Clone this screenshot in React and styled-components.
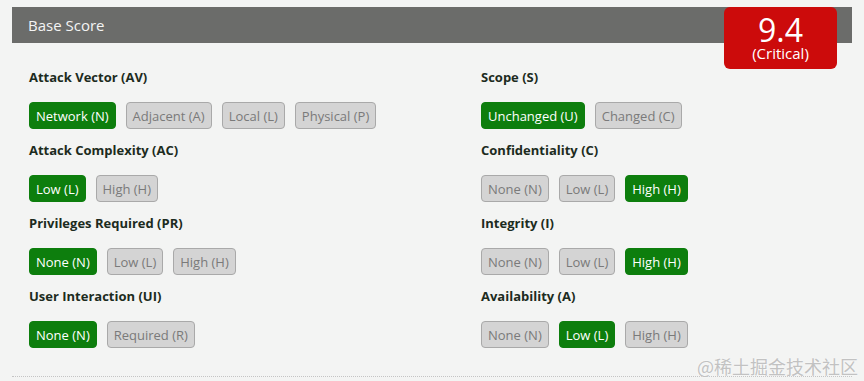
import React from 'react';
import styled, { createGlobalStyle } from 'styled-components';

const GlobalStyle = createGlobalStyle`
  html, body {
    margin: 0;
    padding: 0;
    background: #f3f4f3;
  }
  body {
    font-family: "Open Sans", "Noto Sans", sans-serif;
  }
`;

const Page = styled.div`
  position: relative;
  width: 864px;
  height: 381px;
  padding: 7px 12px 0;
  box-sizing: border-box;
  overflow: hidden;
`;

const Panel = styled.div`
  position: relative;
  border-bottom: 1px dotted #c4c4c4;
`;

const HeaderBar = styled.div`
  height: 36px;
  background: #6b6c6a;
  color: #f4f4f4;
  font-size: 15px;
  display: flex;
  align-items: center;
  padding-left: 16px;
`;

const ScoreBox = styled.div`
  position: absolute;
  top: 0;
  right: 15px;
  width: 113px;
  height: 62px;
  box-sizing: border-box;
  padding-top: 7px;
  background: #cc0b0b;
  border-radius: 6px;
  color: #fff;
  display: flex;
  flex-direction: column;
  align-items: center;
`;

const ScoreValue = styled.div`
  font-size: 32px;
  line-height: 31px;
`;

const ScoreLabel = styled.div`
  font-size: 15px;
  line-height: 16px;
`;

const Metrics = styled.div`
  display: grid;
  grid-template-columns: 452px 1fr;
  padding: 25px 0 28px 17px;
`;

const Column = styled.div`
  display: flex;
  flex-direction: column;
  gap: 12px;
`;

const Metric = styled.div`
  display: flex;
  flex-direction: column;
  gap: 16px;
`;

const MetricTitle = styled.div`
  font-size: 13px;
  font-weight: 700;
  color: #1c2b20;
  line-height: 18px;
`;

const Options = styled.div`
  display: flex;
  gap: 10px;
`;

const Option = styled.div`
  height: 27px;
  box-sizing: border-box;
  padding: 0 6px;
  display: flex;
  align-items: center;
  font-size: 13px;
  border-radius: 4px;
  border: 1px solid ${p => (p.$active ? '#0d7e0d' : '#a9a9a9')};
  background: ${p => (p.$active ? '#0d7e0d' : '#d4d4d4')};
  color: ${p => (p.$active ? '#ffffff' : '#7a7a7a')};
`;

const Watermark = styled.div`
  position: absolute;
  right: 6px;
  bottom: 5px;
  font-family: "Noto Sans CJK SC", sans-serif;
  font-size: 18px;
  line-height: 20px;
  color: #c2c2c2;
  text-shadow: 0 0 2px #fff;
`;

const left = [
  { title: 'Attack Vector (AV)', options: ['Network (N)', 'Adjacent (A)', 'Local (L)', 'Physical (P)'], active: 0 },
  { title: 'Attack Complexity (AC)', options: ['Low (L)', 'High (H)'], active: 0 },
  { title: 'Privileges Required (PR)', options: ['None (N)', 'Low (L)', 'High (H)'], active: 0 },
  { title: 'User Interaction (UI)', options: ['None (N)', 'Required (R)'], active: 0 },
];

const right = [
  { title: 'Scope (S)', options: ['Unchanged (U)', 'Changed (C)'], active: 0 },
  { title: 'Confidentiality (C)', options: ['None (N)', 'Low (L)', 'High (H)'], active: 2 },
  { title: 'Integrity (I)', options: ['None (N)', 'Low (L)', 'High (H)'], active: 2 },
  { title: 'Availability (A)', options: ['None (N)', 'Low (L)', 'High (H)'], active: 1 },
];

function MetricGroup({ items }) {
  return (
    <Column>
      {items.map(m => (
        <Metric key={m.title}>
          <MetricTitle>{m.title}</MetricTitle>
          <Options>
            {m.options.map((o, i) => (
              <Option key={o} $active={i === m.active}>{o}</Option>
            ))}
          </Options>
        </Metric>
      ))}
    </Column>
  );
}

export default function App() {
  return (
    <Page>
      <GlobalStyle />
      <Panel>
        <HeaderBar>Base Score</HeaderBar>
        <ScoreBox>
          <ScoreValue>9.4</ScoreValue>
          <ScoreLabel>(Critical)</ScoreLabel>
        </ScoreBox>
        <Metrics>
          <MetricGroup items={left} />
          <MetricGroup items={right} />
        </Metrics>
      </Panel>
      <Watermark>@稀土掘金技术社区</Watermark>
    </Page>
  );
}
